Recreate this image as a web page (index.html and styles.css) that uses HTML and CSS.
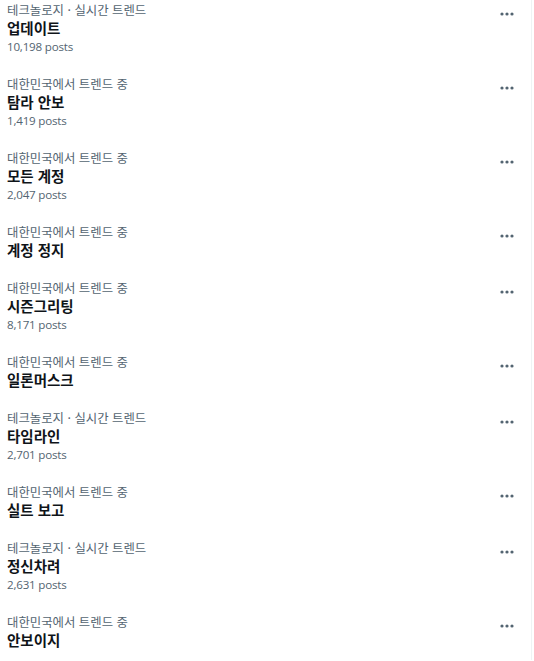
FILE: index.html
```html
<!DOCTYPE html>
<html lang="ko">
<head>
  <meta charset="UTF-8">
  <title>트렌드</title>
  <link rel="stylesheet" href="styles.css">
</head>
<body>
  <div class="trends">

    <div class="trend">
      <div class="info">
        <div class="meta">테크놀로지 · 실시간 트렌드</div>
        <div class="name">업데이트</div>
        <div class="count">10,198 posts</div>
      </div>
      <button class="more" aria-label="더 보기"><svg viewBox="0 0 14 4"><circle cx="2" cy="2" r="1.6"/><circle cx="7" cy="2" r="1.6"/><circle cx="12" cy="2" r="1.6"/></svg></button>
    </div>

    <div class="trend">
      <div class="info">
        <div class="meta">대한민국에서 트렌드 중</div>
        <div class="name">탐라 안보</div>
        <div class="count">1,419 posts</div>
      </div>
      <button class="more" aria-label="더 보기"><svg viewBox="0 0 14 4"><circle cx="2" cy="2" r="1.6"/><circle cx="7" cy="2" r="1.6"/><circle cx="12" cy="2" r="1.6"/></svg></button>
    </div>

    <div class="trend">
      <div class="info">
        <div class="meta">대한민국에서 트렌드 중</div>
        <div class="name">모든 계정</div>
        <div class="count">2,047 posts</div>
      </div>
      <button class="more" aria-label="더 보기"><svg viewBox="0 0 14 4"><circle cx="2" cy="2" r="1.6"/><circle cx="7" cy="2" r="1.6"/><circle cx="12" cy="2" r="1.6"/></svg></button>
    </div>

    <div class="trend">
      <div class="info">
        <div class="meta">대한민국에서 트렌드 중</div>
        <div class="name">계정 정지</div>
      </div>
      <button class="more" aria-label="더 보기"><svg viewBox="0 0 14 4"><circle cx="2" cy="2" r="1.6"/><circle cx="7" cy="2" r="1.6"/><circle cx="12" cy="2" r="1.6"/></svg></button>
    </div>

    <div class="trend">
      <div class="info">
        <div class="meta">대한민국에서 트렌드 중</div>
        <div class="name">시즌그리팅</div>
        <div class="count">8,171 posts</div>
      </div>
      <button class="more" aria-label="더 보기"><svg viewBox="0 0 14 4"><circle cx="2" cy="2" r="1.6"/><circle cx="7" cy="2" r="1.6"/><circle cx="12" cy="2" r="1.6"/></svg></button>
    </div>

    <div class="trend">
      <div class="info">
        <div class="meta">대한민국에서 트렌드 중</div>
        <div class="name">일론머스크</div>
      </div>
      <button class="more" aria-label="더 보기"><svg viewBox="0 0 14 4"><circle cx="2" cy="2" r="1.6"/><circle cx="7" cy="2" r="1.6"/><circle cx="12" cy="2" r="1.6"/></svg></button>
    </div>

    <div class="trend">
      <div class="info">
        <div class="meta">테크놀로지 · 실시간 트렌드</div>
        <div class="name">타임라인</div>
        <div class="count">2,701 posts</div>
      </div>
      <button class="more" aria-label="더 보기"><svg viewBox="0 0 14 4"><circle cx="2" cy="2" r="1.6"/><circle cx="7" cy="2" r="1.6"/><circle cx="12" cy="2" r="1.6"/></svg></button>
    </div>

    <div class="trend">
      <div class="info">
        <div class="meta">대한민국에서 트렌드 중</div>
        <div class="name">실트 보고</div>
      </div>
      <button class="more" aria-label="더 보기"><svg viewBox="0 0 14 4"><circle cx="2" cy="2" r="1.6"/><circle cx="7" cy="2" r="1.6"/><circle cx="12" cy="2" r="1.6"/></svg></button>
    </div>

    <div class="trend">
      <div class="info">
        <div class="meta">테크놀로지 · 실시간 트렌드</div>
        <div class="name">정신차려</div>
        <div class="count">2,631 posts</div>
      </div>
      <button class="more" aria-label="더 보기"><svg viewBox="0 0 14 4"><circle cx="2" cy="2" r="1.6"/><circle cx="7" cy="2" r="1.6"/><circle cx="12" cy="2" r="1.6"/></svg></button>
    </div>

    <div class="trend">
      <div class="info">
        <div class="meta">대한민국에서 트렌드 중</div>
        <div class="name">안보이지</div>
      </div>
      <button class="more" aria-label="더 보기"><svg viewBox="0 0 14 4"><circle cx="2" cy="2" r="1.6"/><circle cx="7" cy="2" r="1.6"/><circle cx="12" cy="2" r="1.6"/></svg></button>
    </div>

  </div>
</body>
</html>
```

FILE: styles.css
```css
body {
  margin: 0;
  padding: 0;
  background: #fff;
  font-family: "Noto Sans CJK KR", "Liberation Sans", sans-serif;
  color: #0f1419;
  overflow: hidden;
}
.trends {
  width: 531px;
  margin-top: -8px;
  border-right: 1px solid #eff3f4;
}
.trend {
  display: flex;
  justify-content: space-between;
  align-items: flex-start;
  padding: 11px 17px 11px 7px;
}
.meta {
  font-size: 12.4px;
  line-height: 14px;
  color: #536471;
}
.name {
  font-size: 14.5px;
  font-weight: bold;
  line-height: 18px;
  margin-top: 2px;
}
.count {
  font-family: "Open Sans", "Liberation Sans", sans-serif;
  font-size: 11.6px;
  letter-spacing: -0.2px;
  line-height: 18px;
  padding-top: 1px;
  margin-bottom: -1px;
  color: #536471;
}
.more {
  border: none;
  background: none;
  padding: 0;
  margin-top: 9px;
  width: 14px;
  height: 4px;
  display: flex;
}
.more svg {
  width: 14px;
  height: 4px;
  fill: #536471;
}
```
